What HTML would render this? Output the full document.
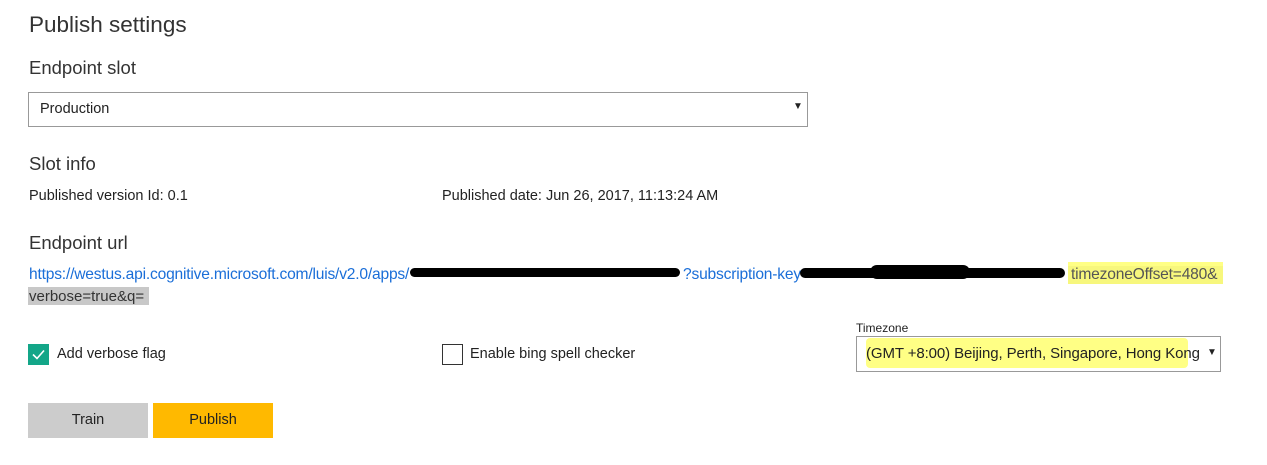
<!DOCTYPE html>
<html><head><style>
body{margin:0;width:1267px;height:465px;background:#fff;font-family:"Liberation Sans",sans-serif;color:#222;position:relative;overflow:hidden}
.a{position:absolute;white-space:nowrap}
.h1{font-size:22.5px;color:#333}
.h2{font-size:18.5px;color:#333}
.t{font-size:14.5px;color:#222}
.u{font-size:15.6px;color:#1a6ed8;letter-spacing:-0.2px}
.sel{position:absolute;border:1px solid #999;background:#fff;box-sizing:border-box}
.blk{position:absolute;background:#000;border-radius:8px}
.hl{position:absolute;background:#ffff70;opacity:.85}
</style></head><body>
<div class="a h1" style="left:29px;top:12px">Publish settings</div>
<div class="a h2" style="left:29px;top:57px">Endpoint slot</div>
<div class="sel" style="left:28px;top:92px;width:780px;height:35px"></div>
<div class="a t" style="left:40px;top:101px">Production</div>
<div class="a" style="left:793px;top:101px;font-size:10px">▼</div>
<div class="a h2" style="left:29px;top:153px">Slot info</div>
<div class="a t" style="left:29px;top:188px">Published version Id: 0.1</div>
<div class="a t" style="left:442px;top:188px">Published date: Jun 26, 2017, 11:13:24 AM</div>
<div class="a h2" style="left:29px;top:232px">Endpoint url</div>
<div class="a" style="left:1068px;top:266px;width:155px;height:18px;background:#c8c8c8"></div>
<div class="hl" style="left:1068px;top:262px;width:155px;height:22px"></div>
<div class="a" style="left:28px;top:287px;width:121px;height:18px;background:#c8c8c8"></div>
<div class="a u" style="left:29px;top:266px">https://westus.api.cognitive.microsoft.com/luis/v2.0/apps/</div>
<div class="a u" style="left:683px;top:266px">?subscription-key=</div>
<div class="a u" style="left:1071px;top:266px;color:#555">timezoneOffset=480&amp;</div>
<div class="a t" style="left:29px;top:288px;color:#333;font-size:15px">verbose=true&amp;q=</div>
<div class="blk" style="left:410px;top:268px;width:270px;height:9px"></div>
<div class="blk" style="left:800px;top:268px;width:265px;height:10px"></div>
<div class="blk" style="left:870px;top:265px;width:100px;height:14px"></div>
<div class="a" style="left:28px;top:344px;width:21px;height:21px;background:#13a688"></div>
<svg class="a" style="left:28px;top:344px" width="21" height="21"><path d="M5 10.5l4 4 7-8" stroke="#fff" stroke-width="1.6" fill="none"/></svg>
<div class="a t" style="left:57px;top:346px">Add verbose flag</div>
<div class="a" style="left:442px;top:344px;width:21px;height:21px;border:1px solid #333;box-sizing:border-box"></div>
<div class="a t" style="left:470px;top:346px">Enable bing spell checker</div>
<div class="a" style="left:856px;top:321px;font-size:12px">Timezone</div>
<div class="sel" style="left:856px;top:336px;width:365px;height:36px"></div>
<div class="hl" style="left:866px;top:338px;width:322px;height:30px;border-radius:4px"></div>
<div class="a t" style="left:866px;top:345px;font-size:15px;letter-spacing:-0.1px">(GMT +8:00) Beijing, Perth, Singapore, Hong Kong</div>
<div class="a" style="left:1207px;top:347px;font-size:10px">▼</div>
<div class="a" style="left:28px;top:403px;width:120px;height:35px;background:#ccc;font-size:14.5px;text-align:center;line-height:35px">Train</div>
<div class="a" style="left:153px;top:403px;width:120px;height:35px;background:#ffb900;font-size:14.5px;text-align:center;line-height:35px">Publish</div>
</body></html>
